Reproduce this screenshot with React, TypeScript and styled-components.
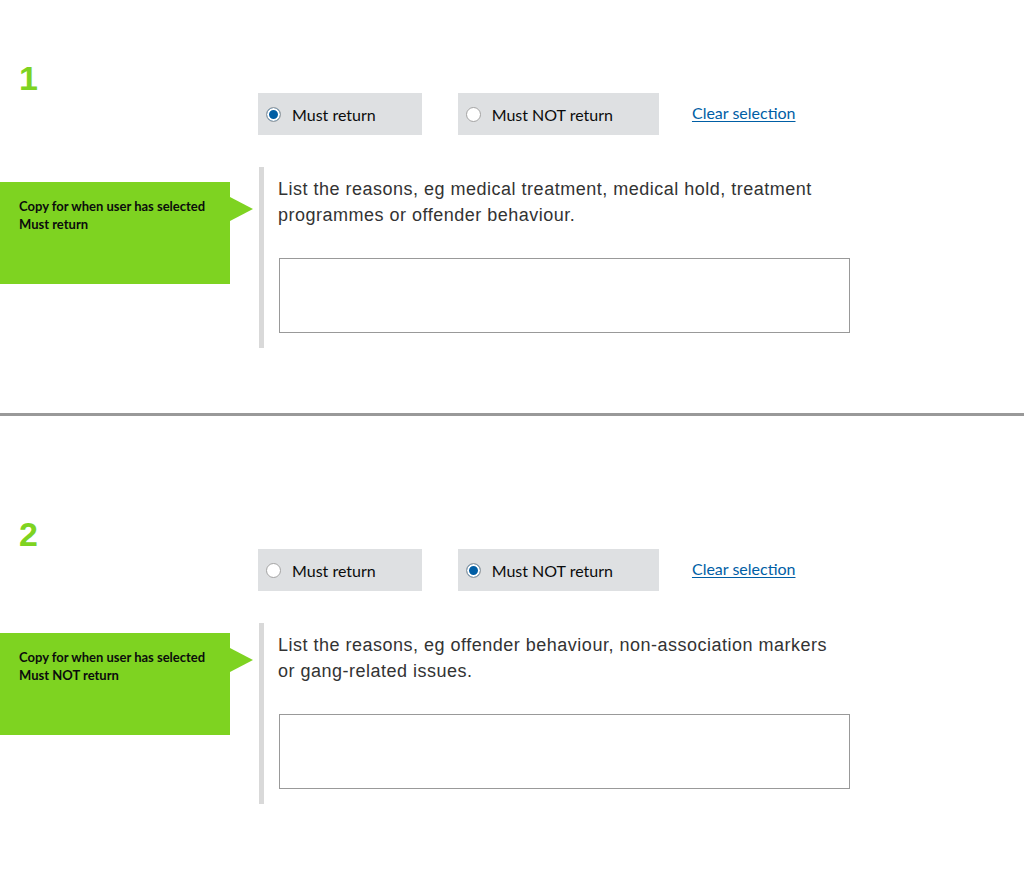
import React from "react";
import styled, { createGlobalStyle } from "styled-components";

const GlobalStyle = createGlobalStyle`
   body {
      margin: 0;
      background: #ffffff;
      font-family: "Lato", "Liberation Sans", sans-serif;
      color: #0b0c0c;
   }
`;

type Variant = {
   id: string;
   number: string;
   selected: "must" | "mustNot";
   label: string;
   hint: string;
   top: number;
   noteOffset: number;
};

const variants: Variant[] = [
   {
      id: "one",
      number: "1",
      selected: "must",
      label: "Must return",
      hint: "List the reasons, eg medical treatment, medical hold, treatment programmes or offender behaviour.",
      top: 63,
      noteOffset: 15,
   },
   {
      id: "two",
      number: "2",
      selected: "mustNot",
      label: "Must NOT return",
      hint: "List the reasons, eg offender behaviour, non-association markers or gang-related issues.",
      top: 103,
      noteOffset: 10,
   },
];

export default function App() {
   return (
      <>
         <GlobalStyle />
         <Page>
            {variants.map((v, i) => (
               <React.Fragment key={v.id}>
                  {i > 0 && <Divider />}
                  <Section $top={v.top}>
                     <Number>{v.number}</Number>
                     <Choices>
                        <Choice>
                           <Radio type="radio" name={v.id} defaultChecked={v.selected === "must"} />
                           Must return
                        </Choice>
                        <Choice>
                           <Radio type="radio" name={v.id} defaultChecked={v.selected === "mustNot"} />
                           Must NOT return
                        </Choice>
                        <ClearLink href="#">Clear selection</ClearLink>
                     </Choices>
                     <Body>
                        <Note $offset={v.noteOffset}>
                           Copy for when user has selected
                           <br />
                           {v.label}
                        </Note>
                        <Conditional>
                           <Hint>{v.hint}</Hint>
                           <Reason />
                        </Conditional>
                     </Body>
                  </Section>
               </React.Fragment>
            ))}
         </Page>
      </>
   );
}

const Page = styled.main`
   width: 100%;
`;

const Section = styled.section<{ $top: number }>`
   padding-top: ${(p) => p.$top}px;
   padding-bottom: 65px;
`;

const Divider = styled.hr`
   margin: 0;
   border: 0;
   height: 3px;
   background: #999999;
`;

const Number = styled.h2`
   margin: 0;
   padding-left: 19px;
   font-family: "Liberation Sans", Arial, sans-serif;
   font-weight: 700;
   font-size: 34px;
   line-height: 30px;
   color: #7ed321;
`;

const Choices = styled.div`
   display: flex;
   align-items: center;
   gap: 36px;
   padding-left: 258px;
`;

const Choice = styled.label`
   display: flex;
   align-items: center;
   gap: 11px;
   height: 42px;
   padding: 0 46px 0 8px;
   background: #dee0e2;
   font-size: 16px;
   color: #0b0c0c;
`;

const Radio = styled.input`
   appearance: none;
   margin: 0;
   width: 15px;
   height: 15px;
   border: 1px solid #a3a3a3;
   border-radius: 50%;
   background: #ffffff;

   &:checked {
      background: #005ea5;
      box-shadow: inset 0 0 0 2px #ffffff;
   }
`;

const ClearLink = styled.a`
   margin: 0 0 3px -3px;
   font-size: 16px;
   color: #005ea5;
   text-decoration: underline;
   text-underline-offset: 2px;
`;

const Body = styled.div`
   display: grid;
   grid-template-columns: 259px 1fr;
   align-items: start;
   margin-top: 32px;
`;

const Note = styled.div<{ $offset: number }>`
   position: relative;
   box-sizing: border-box;
   width: 230px;
   height: 102px;
   margin-top: ${(p) => p.$offset}px;
   padding: 15px 19px;
   background: #7ed321;
   font-weight: 700;
   font-size: 13px;
   line-height: 18px;
   color: #0b0c0c;

   &::after {
      content: "";
      position: absolute;
      left: 100%;
      top: 15px;
      border-left: 23px solid #7ed321;
      border-top: 12px solid transparent;
      border-bottom: 12px solid transparent;
   }
`;

const Conditional = styled.div`
   box-sizing: border-box;
   height: 181px;
   padding: 9px 0 0 14px;
   border-left: 5px solid #d9d9d9;
`;

const Hint = styled.p`
   margin: 0;
   max-width: 560px;
   font-family: "Liberation Sans", Arial, sans-serif;
   font-size: 18px;
   letter-spacing: 0.5px;
   line-height: 26px;
   color: #333333;
`;

const Reason = styled.textarea`
   display: block;
   box-sizing: border-box;
   width: 571px;
   height: 75px;
   margin: 30px 0 0 1px;
   border: 1px solid #999999;
   resize: none;
   font-family: "Liberation Sans", Arial, sans-serif;
   font-size: 16px;
`;
